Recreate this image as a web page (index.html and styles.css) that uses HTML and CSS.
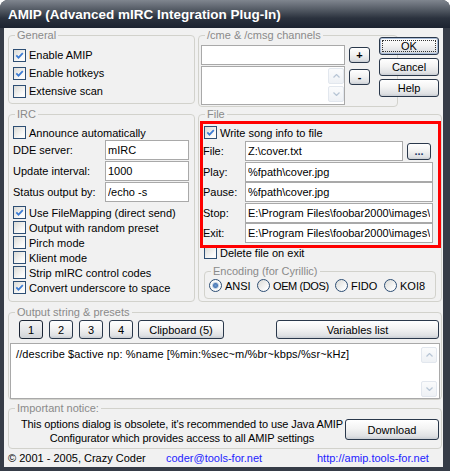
FILE: index.html
```html
<!DOCTYPE html>
<html>
<head>
    <meta charset="UTF-8">
    <title>AMIP (Advanced mIRC Integration Plug-In)</title>
    <link rel="stylesheet" href="styles.css">
</head>
<body>
    <div class="window">
        <div class="titlebar">AMIP (Advanced mIRC Integration Plug-In)</div>
        <div class="client">

            <div class="group general">
                <div class="legend">General</div>
                <div class="general-body">
                    <div class="check"><span class="box"><svg width="11" height="11" viewBox="0 0 11 11"><path d="M2.3 5.4l2.2 2.3 4.3-4.6" fill="none" stroke="#3b7bd4" stroke-width="1.7"/></svg></span>Enable AMIP</div>
                    <div class="check"><span class="box"><svg width="11" height="11" viewBox="0 0 11 11"><path d="M2.3 5.4l2.2 2.3 4.3-4.6" fill="none" stroke="#3b7bd4" stroke-width="1.7"/></svg></span>Enable hotkeys</div>
                    <div class="check"><span class="box"></span>Extensive scan</div>
                </div>
            </div>

            <div class="channels-row">
                <div class="group channels">
                    <div class="legend">/cme &amp; /cmsg channels</div>
                    <div class="channels-grid">
                        <input class="field" type="text" value="">
                        <button class="btn tiny">+</button>
                        <div class="field list">
                            <div class="vscroll">
                                <span class="arrow"><svg width="7" height="4" viewBox="0 0 7 4"><path d="M0.5 3.5l3-3 3 3" fill="none" stroke="#b7c5d5" stroke-width="1.2"/></svg></span>
                                <span class="arrow"><svg width="7" height="4" viewBox="0 0 7 4"><path d="M0.5 0.5l3 3 3-3" fill="none" stroke="#b7c5d5" stroke-width="1.2"/></svg></span>
                            </div>
                        </div>
                        <button class="btn tiny minus">-</button>
                    </div>
                </div>
                <div class="dialog-buttons">
                    <button class="btn default">OK</button>
                    <button class="btn">Cancel</button>
                    <button class="btn">Help</button>
                </div>
            </div>

            <div class="group irc">
                <div class="legend">IRC</div>
                <div class="irc-body">
                    <div class="check row15"><span class="box"></span>Announce automatically</div>
                    <div class="form">
                        <span>DDE server:</span><input class="field" type="text" value="mIRC">
                        <span>Update interval:</span><input class="field" type="text" value="1000">
                        <span>Status output by:</span><input class="field" type="text" value="/echo -s">
                    </div>
                    <div class="irc-checks">
                        <div class="check row15"><span class="box"><svg width="11" height="11" viewBox="0 0 11 11"><path d="M2.3 5.4l2.2 2.3 4.3-4.6" fill="none" stroke="#3b7bd4" stroke-width="1.7"/></svg></span>Use FileMapping (direct send)</div>
                        <div class="check row15"><span class="box"></span>Output with random preset</div>
                        <div class="check row15"><span class="box"></span>Pirch mode</div>
                        <div class="check row15"><span class="box"></span>Klient mode</div>
                        <div class="check row15"><span class="box"></span>Strip mIRC control codes</div>
                        <div class="check row15"><span class="box"><svg width="11" height="11" viewBox="0 0 11 11"><path d="M2.3 5.4l2.2 2.3 4.3-4.6" fill="none" stroke="#3b7bd4" stroke-width="1.7"/></svg></span>Convert underscore to space</div>
                    </div>
                </div>
            </div>

            <div class="group file">
                <div class="legend">File</div>
                <div class="highlight">
                    <div class="check write"><span class="box"><svg width="11" height="11" viewBox="0 0 11 11"><path d="M2.3 5.4l2.2 2.3 4.3-4.6" fill="none" stroke="#3b7bd4" stroke-width="1.7"/></svg></span>Write song info to file</div>
                    <div class="file-rows">
                        <span>File:</span>
                        <div class="file-pick">
                            <input class="field" type="text" value="Z:\cover.txt">
                            <button class="btn browse">...</button>
                        </div>
                        <span>Play:</span><input class="field" type="text" value="%fpath\cover.jpg">
                        <span>Pause:</span><input class="field" type="text" value="%fpath\cover.jpg">
                        <span>Stop:</span><input class="field" type="text" value="E:\Program Files\foobar2000\images\idle.jpg">
                        <span>Exit:</span><input class="field" type="text" value="E:\Program Files\foobar2000\images\idle.jpg">
                    </div>
                </div>
                <div class="check delete"><span class="box"></span>Delete file on exit</div>
                <div class="group encoding">
                    <div class="legend">Encoding (for Cyrillic)</div>
                    <div class="radios">
                        <div class="option"><span class="radio on"></span>ANSI</div>
                        <div class="option narrow"><span class="radio"></span>OEM (DOS)</div>
                        <div class="option"><span class="radio"></span>FIDO</div>
                        <div class="option"><span class="radio"></span>KOI8</div>
                    </div>
                </div>
            </div>

            <div class="group output">
                <div class="legend">Output string &amp; presets</div>
                <div class="presets">
                    <button class="btn num pressed">1</button>
                    <button class="btn num">2</button>
                    <button class="btn num">3</button>
                    <button class="btn num">4</button>
                    <button class="btn clip">Clipboard (5)</button>
                    <button class="btn vars">Variables list</button>
                </div>
                <div class="field memo">
                    <div class="memo-text">//describe $active np: %name [%min:%sec~m/%br~kbps/%sr~kHz]</div>
                    <div class="vscroll">
                        <span class="arrow"><svg width="7" height="4" viewBox="0 0 7 4"><path d="M0.5 3.5l3-3 3 3" fill="none" stroke="#b7c5d5" stroke-width="1.2"/></svg></span>
                        <span class="arrow"><svg width="7" height="4" viewBox="0 0 7 4"><path d="M0.5 0.5l3 3 3-3" fill="none" stroke="#b7c5d5" stroke-width="1.2"/></svg></span>
                    </div>
                </div>
            </div>

            <div class="group notice">
                <div class="legend">Important notice:</div>
                <div class="notice-body">
                    <div class="notice-text">
                        <span>This options dialog is obsolete, it's recommended to use Java AMIP</span>
                        <span>Configurator which provides access to all AMIP settings</span>
                    </div>
                    <button class="btn download">Download</button>
                </div>
            </div>

            <div class="footer">
                <span>&copy; 2001 - 2005, Crazy Coder</span>
                <a href="#">coder@tools-for.net</a>
                <a href="#">http://amip.tools-for.net</a>
            </div>
        </div>
    </div>
</body>
</html>
```

FILE: styles.css
```css
body {
    margin: 0;
    background: #fff;
    font-family: "Liberation Sans", Arial, sans-serif;
    font-size: 11px;
    color: #000;
}
.window {
    width: 450px;
    height: 471px;
    display: flex;
    flex-direction: column;
    background: #363c47;
    border-radius: 8px 8px 0 0;
    overflow: hidden;
}
.titlebar {
    flex: none;
    height: 28px;
    box-sizing: border-box;
    padding: 1px 0 0 8px;
    line-height: 27px;
    font-size: 13.5px;
    font-weight: bold;
    color: #fff;
    background: linear-gradient(#80868f, #535a64 35%, #2b323e 65%, #1c2330);
}
.client {
    flex: 1;
    margin: 0 7px 4px 4px;
    padding: 7px 0 0 4px;
    background: #f1f1f1;
    display: grid;
    grid-template-columns: 187px 244px;
    column-gap: 3px;
    align-content: start;
}
.group {
    box-sizing: border-box;
    border: 1px solid #d2d2cc;
    border-radius: 4px;
}
.legend {
    display: table;
    margin: -7px 0 0 6px;
    padding: 0 2px;
    line-height: 13px;
    color: #8a8a8a;
    background: #f1f1f1;
}
.check {
    display: flex;
    align-items: center;
    white-space: nowrap;
}
.box {
    flex: none;
    width: 13px;
    height: 13px;
    box-sizing: border-box;
    margin-right: 3px;
    border: 1px solid #2d4e74;
    background: linear-gradient(135deg, #dadad6, #fbfbfb 75%);
}
.box svg {
    display: block;
}
.field {
    box-sizing: border-box;
    height: 20px;
    margin: 0;
    padding: 0 2px;
    border: 1px solid #a9a9a9;
    background: #fff;
    font: inherit;
    color: #000;
    outline: none;
}
.btn {
    box-sizing: border-box;
    margin: 0;
    padding: 0;
    border: 1px solid #2a384b;
    border-radius: 3px;
    background: linear-gradient(#ffffff, #f3f3f3 45%, #dfe1e4 85%, #c9cdd3);
    font: inherit;
    color: #000;
}

/* general */
.general {
    height: 69px;
}
.general-body {
    padding: 4px 0 0 4px;
}
.general-body .check {
    height: 18px;
}

/* channels */
.channels-row {
    display: flex;
    align-items: flex-start;
}
.channels {
    flex: none;
    width: 200px;
    height: 72px;
}
.channels-grid {
    display: grid;
    grid-template-columns: 144px 21px;
    grid-template-rows: 20px 39px;
    column-gap: 4px;
    row-gap: 1px;
    margin: 3px 0 0 2px;
}
.tiny {
    height: 16px;
    align-self: center;
    font-weight: bold;
    line-height: 13px;
}
.tiny.minus {
    align-self: start;
    margin-top: 3px;
}
.list {
    height: 39px;
    display: flex;
    justify-content: flex-end;
    padding: 1px 0 2px;
}
.vscroll {
    width: 16px;
    display: flex;
    flex-direction: column;
    justify-content: space-between;
}
.arrow {
    box-sizing: border-box;
    width: 16px;
    height: 16px;
    display: flex;
    align-items: center;
    justify-content: center;
    border: 1px solid #e2e7ee;
    border-radius: 2px;
    background: linear-gradient(#fafbfc, #eef1f5);
}
.arrow svg {
    display: block;
}
.dialog-buttons {
    flex: none;
    width: 60px;
    margin: 2px 0 0 -19px;
    display: flex;
    flex-direction: column;
    gap: 3px;
}
.dialog-buttons .btn {
    height: 18px;
}
.default {
    box-shadow: inset 0 0 0 1px #a9bcd8;
    outline: 1px dotted #333;
    outline-offset: -4px;
}

/* irc */
.irc,
.file {
    height: 188px;
    margin-top: 7px;
}
.irc-body {
    padding: 4px 0 0 4px;
}
.row15 {
    height: 15px;
}
.form {
    display: grid;
    grid-template-columns: 92px 84px;
    grid-auto-rows: 20px;
    row-gap: 1px;
    align-items: center;
}
.irc-checks {
    margin-top: 3px;
}

/* file */
.highlight {
    position: relative;
    z-index: 1;
    box-sizing: border-box;
    width: 241px;
    margin-left: 1px;
    padding-bottom: 2px;
    border: 3px solid #f00;
}
.write {
    height: 17px;
    margin-left: 1px;
}
.file-rows {
    display: grid;
    grid-template-columns: 42px 188px;
    grid-auto-rows: 20px;
    row-gap: 0.5px;
    align-items: center;
}
.file-pick {
    display: flex;
    align-items: center;
}
.file-pick .field {
    width: 158px;
}
.browse {
    width: 24px;
    height: 17px;
    margin-left: 4px;
    line-height: 10px;
    font-weight: bold;
    color: #223a66;
}
.delete {
    height: 13px;
    margin: -2px 0 0 5px;
}
.encoding {
    width: 232px;
    height: 28px;
    margin: 12px 0 0 5px;
}
.radios {
    display: grid;
    grid-template-columns: 48px 78px 49px auto;
    height: 15px;
    padding-left: 4px;
}
.option {
    display: flex;
    align-items: center;
    white-space: nowrap;
}
.option.narrow {
    letter-spacing: -0.4px;
}
.radio {
    flex: none;
    width: 13px;
    height: 13px;
    box-sizing: border-box;
    margin-right: 3px;
    border: 1px solid #2d4e74;
    border-radius: 50%;
    background: linear-gradient(135deg, #dadad6, #fbfbfb 75%);
}
.radio.on {
    background: radial-gradient(circle, #6f97c9 0, #4c7bb8 2px, #c7d4e4 3px, #fbfbfb 4px);
}

/* output */
.output {
    grid-column: 1 / -1;
    height: 88px;
    margin-top: 10px;
}
.presets {
    display: flex;
    height: 19px;
    margin: 1px 2px 0 10px;
}
.presets .btn {
    height: 19px;
}
.num {
    width: 24px;
    margin-right: 6px;
}
.pressed {
    border-color: #1b2535;
    background: linear-gradient(#f4f4f4, #e6e7e9 50%, #d1d4d8);
}
.clip {
    width: 86px;
    margin-left: -1px;
}
.vars {
    width: 163px;
    margin-left: auto;
}
.memo {
    display: flex;
    width: 430px;
    height: 56px;
    margin: 4px 0 0 1px;
    padding: 0 2px 0 0;
}
.memo-text {
    flex: 1;
    padding: 4px 0 0 5px;
    line-height: 13px;
    letter-spacing: 0.12px;
    white-space: nowrap;
}
.memo .vscroll {
    padding: 3px 0 1px;
}

/* notice */
.notice {
    grid-column: 1 / -1;
    height: 41px;
    margin-top: 8px;
}
.notice-body {
    display: flex;
    align-items: flex-start;
    padding-left: 10px;
}
.notice-text {
    width: 326px;
    margin-top: 2px;
    display: flex;
    flex-direction: column;
    align-items: center;
    line-height: 14px;
    letter-spacing: -0.1px;
    white-space: nowrap;
}
.download {
    width: 94px;
    height: 21px;
    margin-top: 4px;
}

/* footer */
.footer {
    grid-column: 1 / -1;
    display: grid;
    grid-template-columns: 158px 151px auto;
    height: 17px;
    margin-top: 1px;
    line-height: 17px;
    white-space: nowrap;
}
.footer a {
    color: #2323ff;
    text-decoration: none;
}
```
